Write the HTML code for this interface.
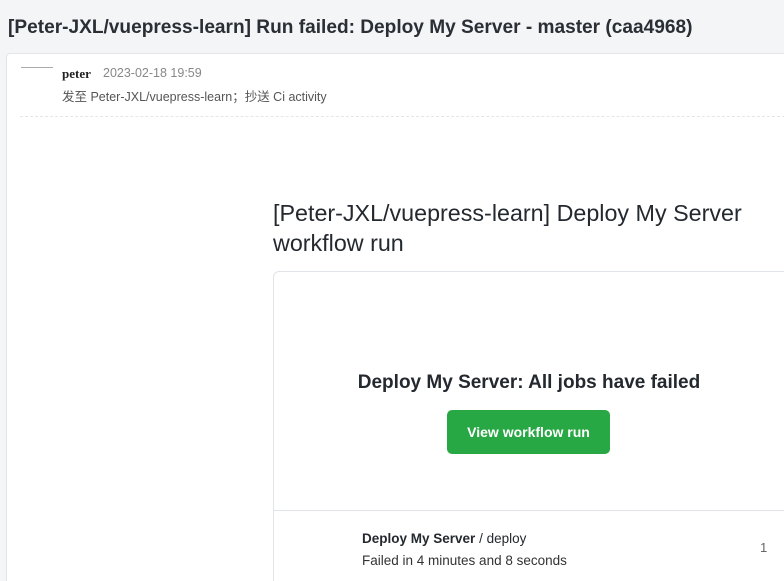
<!DOCTYPE html>
<html style="overflow:hidden;height:581px"><head><meta charset="utf-8"><style>
html,body{margin:0;width:784px;height:581px;overflow:hidden}
body{background:#f4f5f7;font-family:"Liberation Sans","Noto Sans CJK SC",sans-serif;position:relative;color:#24292f}
.t{position:absolute;left:8px;top:17px;font-size:19.1px;font-weight:bold;color:#2a2f35;white-space:nowrap}
.card{position:absolute;left:6px;top:53px;width:790px;height:540px;background:#fff;border:1px solid #e3e5e8;border-radius:4px}
.av{position:absolute;left:21px;top:67px;width:32px;border-top:1px solid #aaa}
.nm{position:absolute;left:62px;top:66px;font-size:13px;font-weight:bold;font-family:"Liberation Serif",serif;color:#222}
.dt{position:absolute;left:103px;top:66px;font-size:12.5px;color:#888}
.to{position:absolute;left:62px;top:86px;font-size:12.5px;color:#555}
.sep{position:absolute;left:20px;top:116px;width:770px;border-top:1px dashed #e6e6e6}
.h{position:absolute;left:273px;top:198px;font-size:23.3px;line-height:30px;color:#24292f;width:505px}
.box{position:absolute;left:273px;top:271px;width:530px;height:330px;border:1px solid #e1e4e8;border-radius:6px}
.jf{position:absolute;left:273px;top:372px;width:512px;text-align:center;font-size:19px;font-weight:bold;color:#24292f}
.btn{position:absolute;left:447px;top:410px;width:163px;height:44px;background:#28a745;border-radius:5px;color:#fff;font-size:14px;font-weight:bold;text-align:center;line-height:44px}
.ln{position:absolute;left:274px;top:510px;width:520px;border-top:1px solid #e1e4e8}
.j1{position:absolute;left:362px;top:531px;font-size:13.5px;color:#24292f}
.j2{position:absolute;left:362px;top:553px;font-size:13.5px;color:#333}
.n{position:absolute;left:760px;top:540px;font-size:13px;color:#666}
</style></head><body>
<div class="t">[Peter-JXL/vuepress-learn] Run failed: Deploy My Server - master (caa4968)</div>
<div class="card"></div>
<div class="av"></div>
<div class="nm">peter</div>
<div class="dt">2023-02-18 19:59</div>
<div class="to">发至 Peter-JXL/vuepress-learn；抄送 Ci activity</div>
<div class="sep"></div>
<div class="h">[Peter-JXL/vuepress-learn] Deploy My Server workflow run</div>
<div class="box"></div>
<div class="jf">Deploy My Server: All jobs have failed</div>
<div class="btn">View workflow run</div>
<div class="ln"></div>
<div class="j1"><b>Deploy My Server</b> / deploy</div>
<div class="j2">Failed in 4 minutes and 8 seconds</div>
<div class="n">1</div>
</body></html>
